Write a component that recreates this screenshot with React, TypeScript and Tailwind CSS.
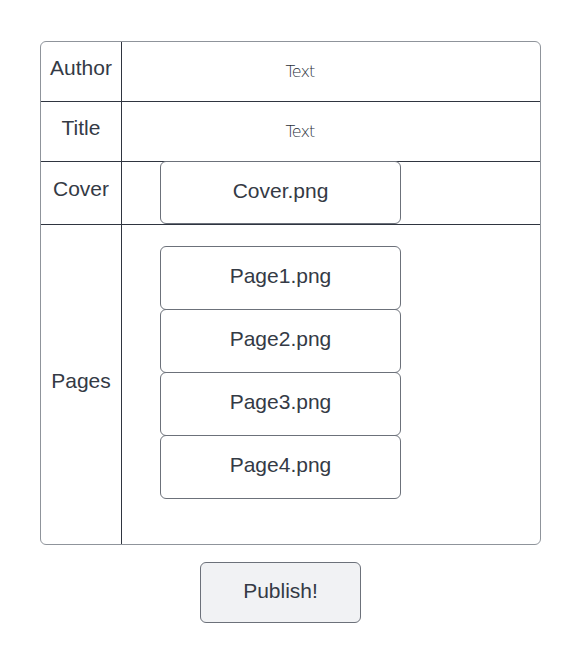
export default function App() {
    const pages = ["Page1.png", "Page2.png", "Page3.png", "Page4.png"];
    const line = "border-[#2f3540]";
    const label = `flex w-[81px] shrink-0 items-center justify-center border-r ${line} pb-2`;
    const sketch =
        "flex flex-1 items-center justify-center pr-[62px] font-['DejaVu_Sans',sans-serif] text-[16px] font-extralight tracking-tighter text-[#2a303a]";

    return (
        <div className="min-h-[662px] w-[580px] bg-white pt-[41px] font-['Liberation_Sans',Arial,sans-serif] text-[21px] text-[#343a45]">
            <div className="ml-[40px] w-[501px] overflow-hidden rounded-md border border-[#8f949b]">
                <div className={`flex h-[60px] border-b ${line}`}>
                    <div className={label}>Author</div>
                    <div className={sketch}>Text</div>
                </div>
                <div className={`flex h-[60px] border-b ${line}`}>
                    <div className={label}>Title</div>
                    <div className={sketch}>Text</div>
                </div>
                <div className={`flex h-[63px] border-b ${line}`}>
                    <div className={label}>Cover</div>
                    <div className="flex-1">
                        <div className="-mt-px ml-[38px] flex h-[63px] w-[241px] items-center justify-center rounded-md border border-[#6c717a] bg-white pb-1">
                            Cover.png
                        </div>
                    </div>
                </div>
                <div className="flex h-[319px]">
                    <div className={label}>Pages</div>
                    <div className="flex-1 pt-[21px]">
                        {pages.map((p, i) => (
                            <div
                                key={p}
                                className={`ml-[38px] flex h-[64px] w-[241px] items-center justify-center rounded-md border border-[#6c717a] bg-white pb-1 ${i > 0 ? "-mt-px" : ""}`}
                            >
                                {p}
                            </div>
                        ))}
                    </div>
                </div>
            </div>

            <button className="ml-[200px] mt-[17px] flex h-[61px] w-[161px] items-center justify-center rounded-md border border-[#6c717a] bg-[#f1f2f4] pb-1 text-[#343a45]">
                Publish!
            </button>
        </div>
    );
}
